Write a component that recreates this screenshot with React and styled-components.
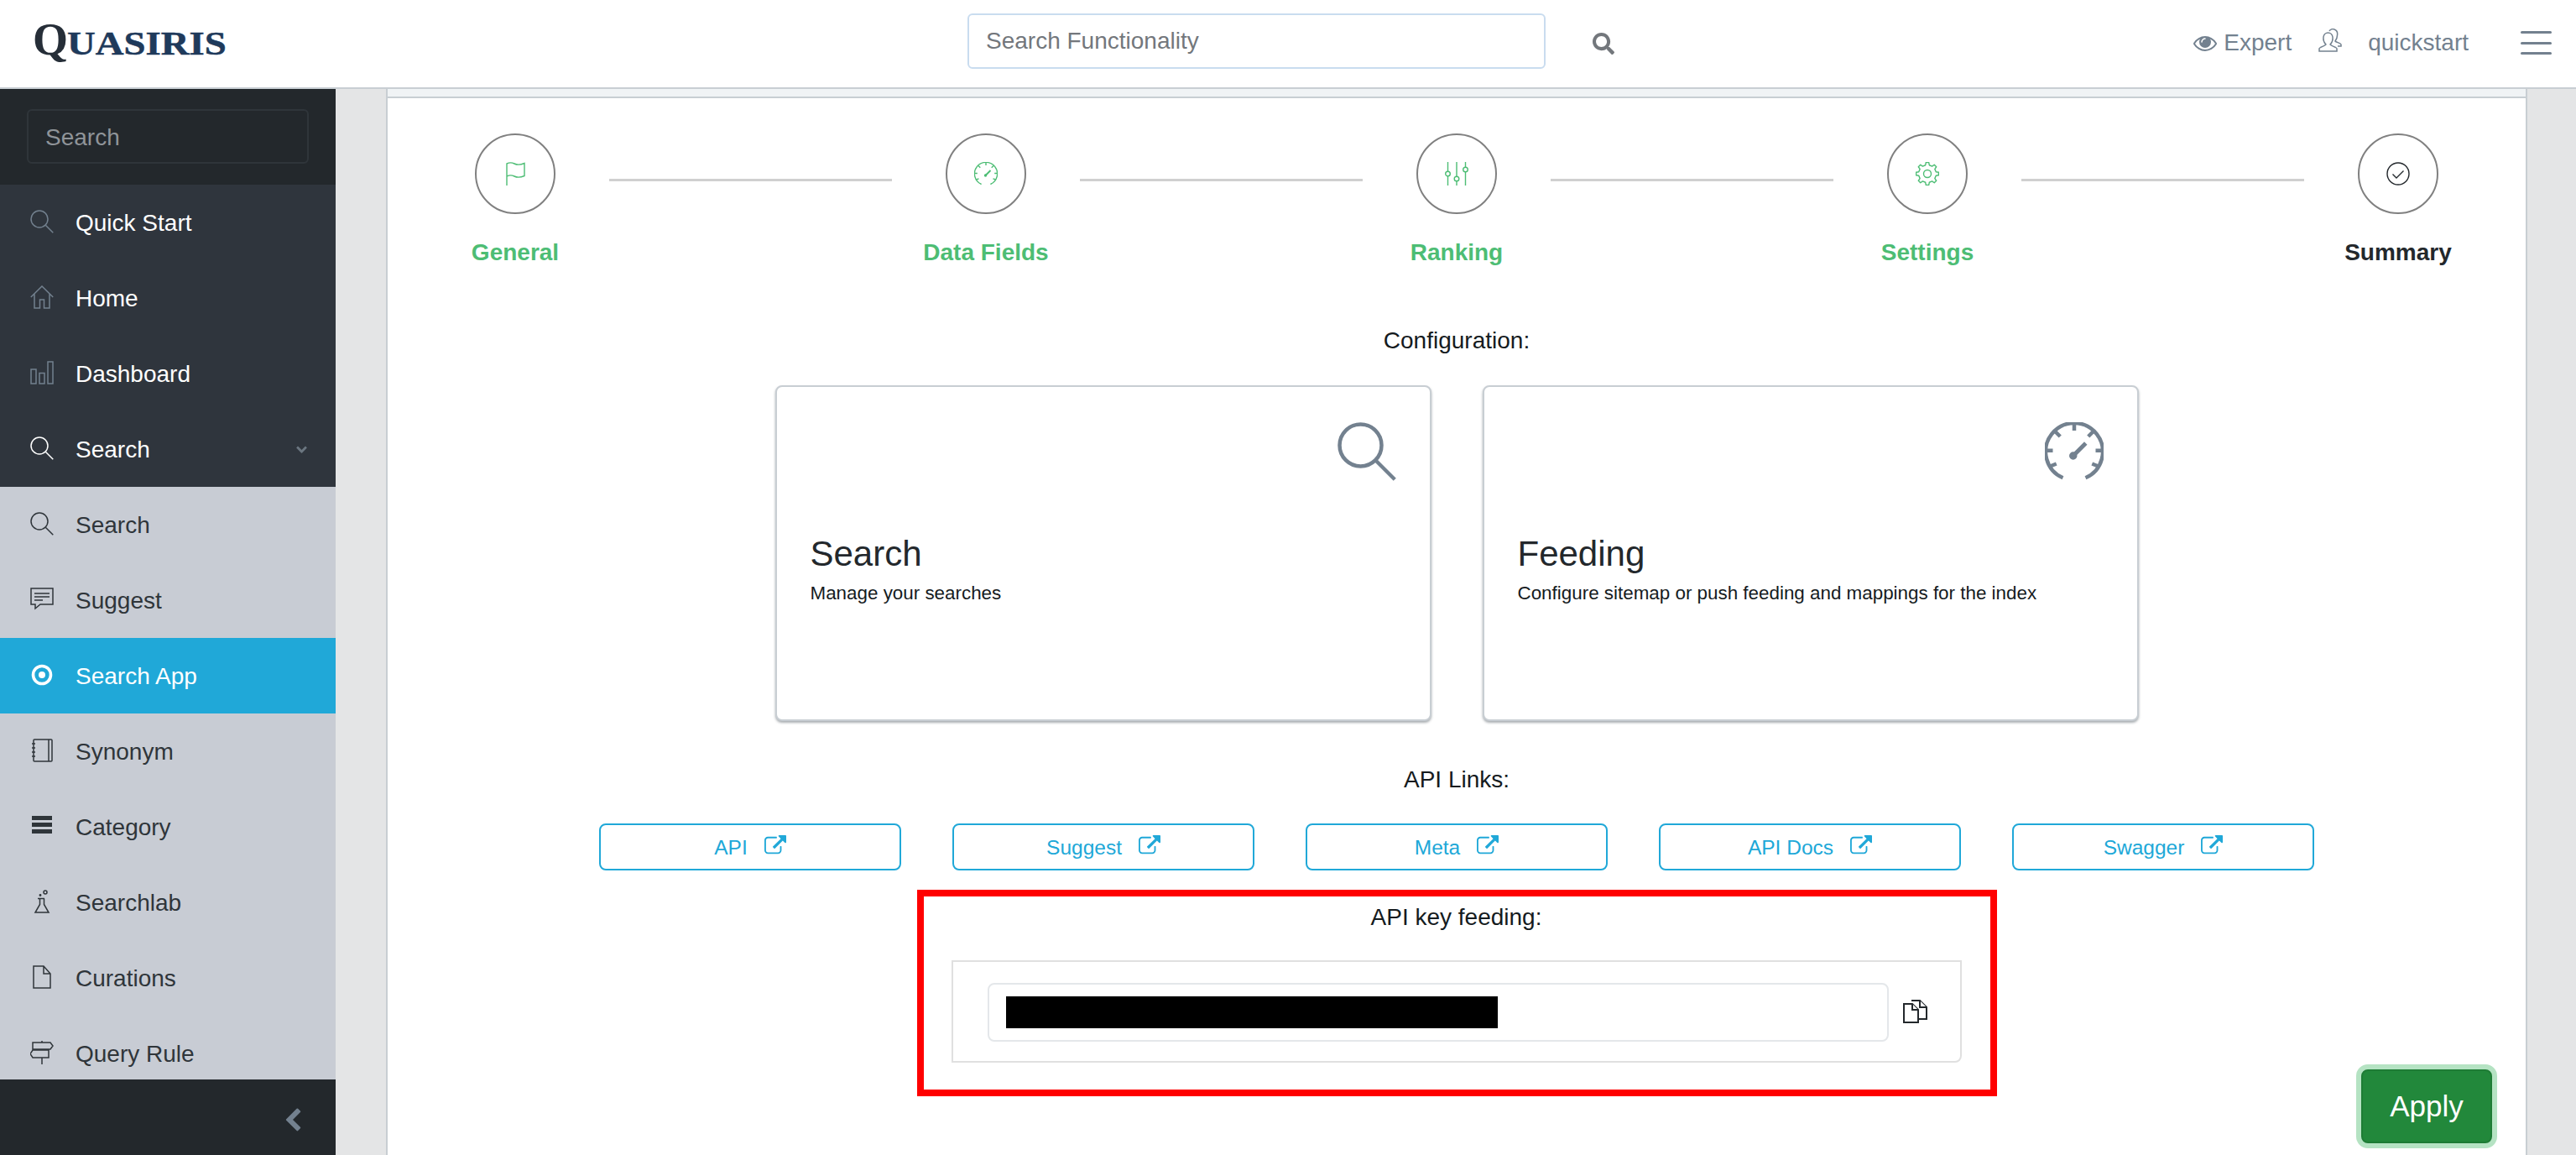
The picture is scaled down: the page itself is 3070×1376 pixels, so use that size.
import React from 'react'
import styled, { createGlobalStyle } from 'styled-components'
import { FaSearch } from 'react-icons/fa'

const GlobalStyle = createGlobalStyle`
  html, body { margin: 0; padding: 0; height: 100%; overflow: hidden; }
  body { font-family: "Liberation Sans", Arial, sans-serif; font-size: 28px; color: #151b1e; background: #e4e5e6; }
  * { box-sizing: border-box; }
`

const Page = styled.div`
  height: 1376px;
  display: flex;
  flex-direction: column;
  overflow: hidden;
`

/* top bar */
const Header = styled.header`
  flex: none;
  height: 106px;
  display: flex;
  align-items: center;
  background: #fff;
  border-bottom: 2px solid #c8ced3;
  padding-right: 29px;
`
const LogoBox = styled.div`
  width: 1153px;
  padding-left: 39px;
  display: flex;
  align-items: baseline;
  font-family: "Liberation Serif", serif;
  font-weight: bold;
  line-height: 1;
  position: relative;
  top: -5px;
`
const LogoQ = styled.span`
  font-size: 54px;
  color: #262e38;
  width: 41px;
`
const LogoRest = styled.span`
  font-size: 41px;
  color: #1f3a5b;
  -webkit-text-stroke: 0.5px #1f3a5b;
  transform: scaleX(1.14);
  transform-origin: left;
`
const TopSearch = styled.input`
  width: 689px;
  height: 66px;
  border: 2px solid #c9dcef;
  border-radius: 6px;
  padding: 0 20px;
  font: 28px "Liberation Sans", Arial, sans-serif;
  outline: none;
  position: relative;
  top: -3px;
  &::placeholder { color: #73777c; opacity: 1; }
`
const TopSearchIcon = styled.span`
  display: flex;
  margin-left: 56px;
  color: #73777c;
  font-size: 26px;
`
const TopRight = styled.div`
  margin-left: auto;
  display: flex;
  align-items: center;
  color: #73818f;
  font-size: 28px;
  position: relative;
  top: -1px;
`
const EyeIcon = styled.svg`
  width: 28px;
  height: 28px;
  margin-right: 8px;
  fill: #73818f;
`
const UserIcon = styled.svg`
  width: 28px;
  height: 28px;
  margin: -6px 31px 0 32px;
  fill: none;
  stroke: #73818f;
  stroke-width: 1.5;
`
const Burger = styled.div`
  width: 37px;
  height: 28px;
  margin-left: 62px;
  display: flex;
  flex-direction: column;
  justify-content: space-between;
  span {
    height: 3px;
    border-radius: 2px;
    background: #73818f;
  }
`

/* body */
const Body = styled.div`
  flex: 1;
  min-height: 0;
  display: flex;
`
const Sidebar = styled.aside`
  flex: none;
  width: 400px;
  display: flex;
  flex-direction: column;
  background: #2f353d;
`
const SideSearchBar = styled.div`
  flex: none;
  height: 114px;
  background: #23282c;
  padding: 24px 32px 0;
`
const SideSearch = styled.input`
  width: 336px;
  height: 65px;
  background: #23282c;
  border: 2px solid #2f353a;
  border-radius: 6px;
  padding: 2px 20px 0;
  color: #fff;
  font: 28px "Liberation Sans", Arial, sans-serif;
  outline: none;
  &::placeholder { color: #8f9499; opacity: 1; }
`
const Nav = styled.nav`
  flex: 1;
  min-height: 0;
  overflow: hidden;
`
const Item = styled.a`
  height: 90px;
  display: flex;
  align-items: center;
  padding: 2px 0 0 36px;
  font-size: 28px;
  color: ${p => (p.$sub ? '#2f353a' : '#fff')};
  background: ${p => (p.$active ? '#20a8d8' : p.$sub ? '#c8ccd4' : '#2f353d')};
`
const ItemIcon = styled.svg`
  flex: none;
  width: 28px;
  height: 28px;
  margin: -4px 26px 0 0;
  fill: none;
  stroke: ${p => p.$color};
  stroke-width: 1.5;
`
const ChevronDown = styled.svg`
  width: 14px;
  height: 14px;
  margin-left: auto;
  margin-right: 33px;
  fill: #6b7680;
  transform: rotate(-90deg);
`
const SideFooter = styled.div`
  flex: none;
  height: 90px;
  background: #23282c;
  display: flex;
  align-items: center;
  justify-content: flex-end;
  padding: 8px 36px 0 0;
`
const ChevronLeft = styled.svg`
  width: 30px;
  height: 30px;
  fill: #73818f;
`

const Main = styled.main`
  flex: 1;
  min-width: 0;
  position: relative;
  padding: 0 58px 0 60px;
  overflow: hidden;
`
const Panel = styled.section`
  height: 100%;
  background: #fff;
  border-left: 2px solid #c8ced3;
  border-right: 2px solid #c8ced3;
`
const PanelStrip = styled.div`
  height: 11px;
  background: #f0f3f5;
  border-bottom: 2px solid #c8ced3;
`
const PanelBody = styled.div`
  padding: 42px 40px 0;
  display: flex;
  flex-direction: column;
  align-items: center;
`

/* stepper */
const Stepper = styled.div`
  flex: none;
  display: flex;
  width: 2468px;
`
const Step = styled.div`
  flex: none;
  width: 224px;
  display: flex;
  flex-direction: column;
  align-items: center;
`
const StepCircle = styled.div`
  width: 96px;
  height: 96px;
  border: 2px solid #808080;
  border-radius: 50%;
  display: flex;
  align-items: center;
  justify-content: center;
`
const StepIcon = styled.svg`
  width: 28px;
  height: 28px;
  fill: none;
  stroke: ${p => (p.$done ? '#4dbd74' : '#23282c')};
  stroke-width: 1.4;
`
const StepLabel = styled.div`
  margin-top: 25px;
  line-height: 42px;
  font-weight: bold;
  color: ${p => (p.$done ? '#4dbd74' : '#23282c')};
`
const Connector = styled.div`
  flex: none;
  width: 337px;
  height: 3px;
  margin-top: 54px;
  background: #d0d0d0;
`

const Caption = styled.div`
  line-height: 42px;
  margin-top: ${p => p.$top}px;
  text-align: center;
`
const Cards = styled.div`
  display: flex;
  gap: 61px;
  margin-top: 32px;
`
const Tile = styled.div`
  width: 782px;
  height: 400px;
  background: #fff;
  border: 2px solid #c8ced3;
  border-radius: 8px;
  box-shadow: 0 2px 3px rgba(60, 70, 80, 0.45);
  padding: 42px 40px 0 40px;
  display: flex;
  flex-direction: column;
`
const TileIcon = styled.svg`
  flex: none;
  align-self: flex-end;
  width: 70px;
  height: 70px;
  fill: none;
  stroke: #73818f;
  stroke-width: 1.8;
`
const TileTitle = styled.div`
  margin-top: 62px;
  font-size: 42px;
  line-height: 50px;
  color: #23282c;
`
const TileText = styled.div`
  margin-top: 4px;
  font-size: 22.4px;
  line-height: 36px;
`
const LinkRow = styled.div`
  display: flex;
  gap: 61px;
  margin-top: 31px;
`
const LinkButton = styled.a`
  width: 360px;
  height: 56px;
  padding-top: 2px;
  border: 2px solid #20a8d8;
  border-radius: 8px;
  color: #20a8d8;
  font-size: 24.5px;
  display: flex;
  align-items: center;
  justify-content: center;
  gap: 20px;
`
const LinkIcon = styled.svg`
  width: 26px;
  height: 26px;
  margin-top: -4px;
  fill: #20a8d8;
`

/* the red frame marks the api key block */
const RedFrame = styled.div`
  width: 1287px;
  height: 246px;
  margin-top: 23px;
  border: 8px solid #f00;
  padding: 4px 34px 0 33px;
`
const KeyBox = styled.div`
  height: 122px;
  margin-top: 30px;
  border: 2px solid #e0e0e0;
  border-radius: 0 0 8px 0;
  display: flex;
  align-items: center;
  padding: 2px 0 0 41px;
`
const KeyField = styled.div`
  width: 1074px;
  height: 70px;
  border: 2px solid #e4e7ea;
  border-radius: 8px;
  display: flex;
  align-items: center;
  padding-left: 20px;
`
const Redacted = styled.span`
  width: 586px;
  height: 38px;
  background: #000;
`
const CopyIcon = styled.svg`
  width: 29px;
  height: 28px;
  margin: -3px 0 0 17px;
  fill: #fff;
  stroke: #23282c;
  stroke-width: 2;
`
const ApplyButton = styled.button`
  position: absolute;
  right: 100px;
  bottom: 14px;
  width: 156px;
  height: 88px;
  background: #22883b;
  border: 2px solid #1e7c35;
  border-radius: 8px;
  box-shadow: 0 0 0 6px #b5e3c3;
  color: #fff;
  font: 35px "Liberation Sans", Arial, sans-serif;
`

/* simple-line style icons, all on a 28 box */
const Magnifier = () => (
  <>
    <circle cx="11" cy="11" r="10" />
    <path d="M18.3 18.3 27.3 27.3" />
  </>
)
const Home = () => <path d="M.8 14 14 1l13.2 13M5 10.5V27h6.5V17h5v10H23V10.5" />
const Chart = () => (
  <>
    <rect x="1" y="10" width="6" height="17" />
    <rect x="11" y="14.5" width="6" height="12.5" />
    <rect x="21" y="1" width="6" height="26" />
  </>
)
const Speech = () => (
  <>
    <path d="M1 1h26v19H12l-6 5v-5H1z" />
    <path d="M5 7h18M5 11h18M5 15h10" />
  </>
)
const Dot = () => (
  <>
    <circle cx="14" cy="14" r="10.5" strokeWidth="3.6" />
    <circle cx="14" cy="14" r="4" fill="currentColor" stroke="none" />
  </>
)
const Notebook = () => (
  <>
    <rect x="4" y="1" width="22" height="26" rx="1" />
    <path d="M22 1v26M2 6h4M2 11h4M2 16h4M2 21h4" />
  </>
)
const Bars = () => <path d="M2 4.500h24M2 12.500h24M2 20.500h24" strokeWidth="4.8" />
const Flask = () => (
  <>
    <circle cx="18" cy="3" r="2" />
    <circle cx="12" cy="6.500" r=".7" />
    <path d="M9 10.500h8M11.500 10.500v7L6 27h16l-5.500-9.500v-7" />
  </>
)
const Doc = () => <path d="M4 1h12l8 9v17H4zM16 1v9h8" />
const Sign = () => (
  <path d="M14 0v2M14 10v1M14 20v8M3 2h21l3 4-3 4H3zM22 11H3l-3 4.500L3 20h19z" />
)
const Flag = () => (
  <path d="M4 28V2c4-2 7-1 9 0s6 2 12-.5v15c-6 2.500-10 1.500-12 .5s-5-2-9 0" />
)
const Gauge = () => (
  <>
    <path d="M8.600 26.500A13.600 13.600 0 1 1 19.400 26.500" />
    <path d="M14 .5v3.500M5 4.500l2.300 2.300M23 4.500l-2.300 2.300M.6 13.500h3.200M27.400 13.500h-3.200M2.500 21l3-1.200M25.500 21l-3-1.200" />
    <path d="M13.500 16 19.500 10" strokeWidth="2" />
    <circle cx="13.500" cy="16" r="1" fill="currentColor" />
  </>
)
const Sliders = () => (
  <>
    <path d="M3.500 0v11M3.500 17v11M14 0v17M14 23v5M24.500 0v6M24.500 12v16" />
    <circle cx="3.500" cy="14" r="2.800" />
    <circle cx="14" cy="20" r="2.800" />
    <circle cx="24.500" cy="9" r="2.800" />
  </>
)
// eight wavy teeth round the centre of the 28 box
const gearPath = (() => {
  const pts = []
  for (let i = 0; i < 8; i++) {
    const a = (i * Math.PI) / 4 - Math.PI / 2
    const spots = [[-0.22, 10.5], [-0.13, 13.5], [0.13, 13.5], [0.22, 10.5]]
    spots.forEach(([d, r]) => {
      pts.push(`${(14 + r * Math.cos(a + d)).toFixed(2)} ${(14 + r * Math.sin(a + d)).toFixed(2)}`)
    })
  }
  return `M${pts.join('L')}z`
})()
const Gear = () => (
  <>
    <path d={gearPath} strokeLinejoin="round" />
    <circle cx="14" cy="14" r="4.500" />
  </>
)
const Check = () => (
  <>
    <circle cx="14" cy="14" r="13" />
    <path d="M7.500 14.500 12 19l8.500-8.500" />
  </>
)

const sideItems = [
  { label: 'Quick Start', icon: Magnifier, color: '#73818f' },
  { label: 'Home', icon: Home, color: '#73818f' },
  { label: 'Dashboard', icon: Chart, color: '#73818f' },
  { label: 'Search', icon: Magnifier, color: '#fff', open: true },
  { label: 'Search', icon: Magnifier, color: '#2f353a', sub: true },
  { label: 'Suggest', icon: Speech, color: '#2f353a', sub: true },
  { label: 'Search App', icon: Dot, color: '#fff', active: true },
  { label: 'Synonym', icon: Notebook, color: '#2f353a', sub: true },
  { label: 'Category', icon: Bars, color: '#2f353a', sub: true },
  { label: 'Searchlab', icon: Flask, color: '#2f353a', sub: true },
  { label: 'Curations', icon: Doc, color: '#2f353a', sub: true },
  { label: 'Query Rule', icon: Sign, color: '#2f353a', sub: true },
]

const steps = [
  { label: 'General', icon: Flag, done: true },
  { label: 'Data Fields', icon: Gauge, done: true },
  { label: 'Ranking', icon: Sliders, done: true },
  { label: 'Settings', icon: Gear, done: true },
  { label: 'Summary', icon: Check, done: false },
]

const tiles = [
  { title: 'Search', text: 'Manage your searches', icon: Magnifier },
  { title: 'Feeding', text: 'Configure sitemap or push feeding and mappings for the index', icon: Gauge },
]

const apiLinks = ['API', 'Suggest', 'Meta', 'API Docs', 'Swagger']

const externalPath =
  'M1408 928v320q0 119-84.5 203.5t-203.5 84.5h-832q-119 0-203.5-84.5t-84.5-203.5v-832q0-119 84.5-203.5t203.5-84.5h704q14 0 23 9t9 23v64q0 14-9 23t-23 9h-704q-66 0-113 47t-47 113v832q0 66 47 113t113 47h832q66 0 113-47t47-113v-320q0-14 9-23t23-9h64q14 0 23 9t9 23zm384-864v512q0 26-19 45t-45 19-45-19l-176-176-652 652q-10 10-23 10t-23-10l-114-114q-10-10-10-23t10-23l652-652-176-176q-19-19-19-45t19-45 45-19h512q26 0 45 19t19 45z'
const eyePath =
  'M1664 960q-152-236-381-353 61 104 61 225 0 185-131.500 316.500t-316.500 131.500-316.500-131.500-131.500-316.500q0-121 61-225-229 117-381 353 133 205 333.500 326.500t434.500 121.500 434.500-121.500 333.500-326.500zm-720-384q0-20-14-34t-34-14q-125 0-214.500 89.500t-89.500 214.500q0 20 14 34t34 14 34-14 14-34q0-86 61-147t147-61q20 0 34-14t14-34zm848 384q0 34-20 69-140 230-376.500 368.500t-499.500 138.500-499.500-139-376.500-368q-20-35-20-69t20-69q140-229 376.500-368t499.500-139 499.500 139 376.500 368q20 35 20 69z'
const chevronPath =
  'M1427 301l-531 531 531 531q19 19 19 45t-19 45l-166 166q-19 19-45 19t-45-19l-742-742q-19-19-19-45t19-45l742-742q19-19 45-19t45 19l166 166q19 19 19 45t-19 45z'

export default function App() {
  return (
    <Page>
      <GlobalStyle />
      <Header>
        <LogoBox>
          <LogoQ>Q</LogoQ>
          <LogoRest>UASIRIS</LogoRest>
        </LogoBox>
        <TopSearch placeholder="Search Functionality" />
        <TopSearchIcon><FaSearch /></TopSearchIcon>
        <TopRight>
          <EyeIcon viewBox="0 0 1792 1792"><path d={eyePath} /></EyeIcon>
          Expert
          <UserIcon viewBox="0 0 28 28">
            <path d="M1 27v-3c0-2 7-3 8-5-2-2-3.500-5-3-9 .5-3 3-5 5.500-5s5 2 5.500 5c.5 4-1 7-3 9 1 2 8 3 8 5v3z" />
            <path d="M13 3c1-2 4-3 6-2 3 1 4 4 3.500 7 0 3-1 5-2.500 7 1 1.500 6 2 7 4v2h-4" />
          </UserIcon>
          quickstart
          <Burger><span /><span /><span /></Burger>
        </TopRight>
      </Header>
      <Body>
        <Sidebar>
          <SideSearchBar>
            <SideSearch placeholder="Search" />
          </SideSearchBar>
          <Nav>
            {sideItems.map((it, i) => (
              <Item key={i} $sub={it.sub} $active={it.active}>
                <ItemIcon viewBox="0 0 28 28" $color={it.color} color={it.color}>
                  <it.icon />
                </ItemIcon>
                {it.label}
                {it.open && <ChevronDown viewBox="0 0 1792 1792"><path d={chevronPath} /></ChevronDown>}
              </Item>
            ))}
          </Nav>
          <SideFooter>
            <ChevronLeft viewBox="0 0 1792 1792"><path d={chevronPath} /></ChevronLeft>
          </SideFooter>
        </Sidebar>
        <Main>
          <Panel>
            <PanelStrip />
            <PanelBody>
              <Stepper>
                {steps.map((s, i) => (
                  <React.Fragment key={s.label}>
                    {i > 0 && <Connector />}
                    <Step>
                      <StepCircle>
                        <StepIcon viewBox="0 0 28 28" $done={s.done} color={s.done ? '#4dbd74' : '#23282c'}>
                          <s.icon />
                        </StepIcon>
                      </StepCircle>
                      <StepLabel $done={s.done}>{s.label}</StepLabel>
                    </Step>
                  </React.Fragment>
                ))}
              </Stepper>
              <Caption $top={63}>Configuration:</Caption>
              <Cards>
                {tiles.map(t => (
                  <Tile key={t.title}>
                    <TileIcon viewBox="0 0 28 28" color="#73818f"><t.icon /></TileIcon>
                    <TileTitle>{t.title}</TileTitle>
                    <TileText>{t.text}</TileText>
                  </Tile>
                ))}
              </Cards>
              <Caption $top={49}>API Links:</Caption>
              <LinkRow>
                {apiLinks.map(l => (
                  <LinkButton key={l}>
                    {l}
                    <LinkIcon viewBox="0 0 1792 1792"><path d={externalPath} /></LinkIcon>
                  </LinkButton>
                ))}
              </LinkRow>
              <RedFrame>
                <Caption $top={0}>API key feeding:</Caption>
                <KeyBox>
                  <KeyField><Redacted /></KeyField>
                  <CopyIcon viewBox="0 0 29 28">
                    <path d="M10 1h10l8 8v14h-9" />
                    <path d="M20 1v8h8" />
                    <path d="M1 5h10l7 7v15H1z" />
                    <path d="M11 5v7h7" />
                  </CopyIcon>
                </KeyBox>
              </RedFrame>
            </PanelBody>
          </Panel>
          <ApplyButton>Apply</ApplyButton>
        </Main>
      </Body>
    </Page>
  )
}
